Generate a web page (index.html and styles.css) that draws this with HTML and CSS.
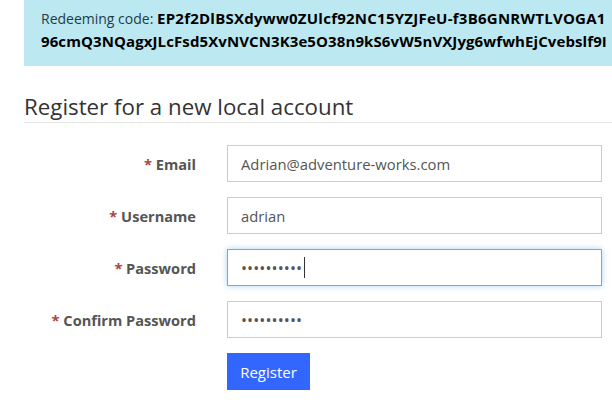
FILE: index.html
```html
<!DOCTYPE html>
<html>
<head>
<meta charset="utf-8">
<link rel="stylesheet" href="styles.css">
</head>
<body>
<div class="page">
  <div class="alert">
    <div class="alert-line">Redeeming code: <strong>EP2f2DlBSXdyww0ZUlcf92NC15YZJFeU-f3B6GNRWTLVOGA1</strong></div>
    <div class="alert-line"><strong class="tight">96cmQ3NQagxJLcFsd5XvNVCN3K3e5O38n9kS6vW5nVXJyg6wfwhEjCvebslf9I</strong></div>
  </div>
  <h2 class="title">Register for a new local account</h2>
  <form class="form">
    <div class="row">
      <label class="label"><span class="req">*</span> Email</label>
      <div class="input">Adrian@adventure-works.com</div>
    </div>
    <div class="row">
      <label class="label"><span class="req">*</span> Username</label>
      <div class="input">adrian</div>
    </div>
    <div class="row">
      <label class="label"><span class="req">*</span> Password</label>
      <div class="input focus"><span class="dots">••••••••••</span><span class="caret"></span></div>
    </div>
    <div class="row">
      <label class="label"><span class="req">*</span> Confirm Password</label>
      <div class="input"><span class="dots">••••••••••</span></div>
    </div>
    <div class="row">
      <span></span>
      <div><button type="button" class="btn">Register</button></div>
    </div>
  </form>
</div>
</body>
</html>
```

FILE: styles.css
```css
html, body {
  margin: 0;
  padding: 0;
  background: #fff;
  overflow: hidden;
}
body {
  font-family: "Open Sans", "Noto Sans", sans-serif;
  color: #333;
  width: 612px;
  height: 410px;
}
.page {
  padding-left: 24px;
}
.alert {
  width: 588px;
  height: 66px;
  box-sizing: border-box;
  background: #bce8f1;
  padding: 7px 0 0 17px;
  font-size: 14px;
  line-height: 22px;
  overflow: hidden;
}
.alert-line {
  white-space: nowrap;
  color: #1d3d4b;
}
.alert-line strong {
  color: #000;
  font-weight: 700;
  font-size: 15px;
  letter-spacing: 0.25px;
}
.alert-line strong.tight {
  letter-spacing: 0.1px;
}
.title {
  margin: 28px 0 0 0;
  font-size: 22.3px;
  font-weight: 400;
  line-height: 26px;
  color: #333;
  padding-bottom: 2px;
  border-bottom: 1px solid #e5e5e5;
}
.form {
  margin-top: 22px;
  display: grid;
  grid-template-columns: 172px 375px;
  column-gap: 31px;
  row-gap: 15px;
  align-items: center;
}
.row {
  display: contents;
}
.label {
  text-align: right;
  font-weight: 700;
  font-size: 14.6px;
  color: #555;
}
.req {
  color: #a94442;
}
.input {
  height: 37px;
  box-sizing: border-box;
  border: 1px solid #ccc;
  padding: 0 13px;
  display: flex;
  align-items: center;
  font-size: 14.8px;
  color: #555;
}
.input.focus {
  border-color: #66afe9;
  box-shadow: 0 0 6px rgba(102, 175, 233, 0.55);
}
.dots {
  font-size: 16px;
  letter-spacing: 0.1px;
  color: #555;
}
.caret {
  display: inline-block;
  width: 1px;
  height: 21px;
  background: #333;
  margin-left: 2px;
}
.btn {
  height: 37px;
  width: 83px;
  border: none;
  background: #3366ff;
  color: #fff;
  font-family: inherit;
  font-size: 15px;
  padding: 0;
}
```
